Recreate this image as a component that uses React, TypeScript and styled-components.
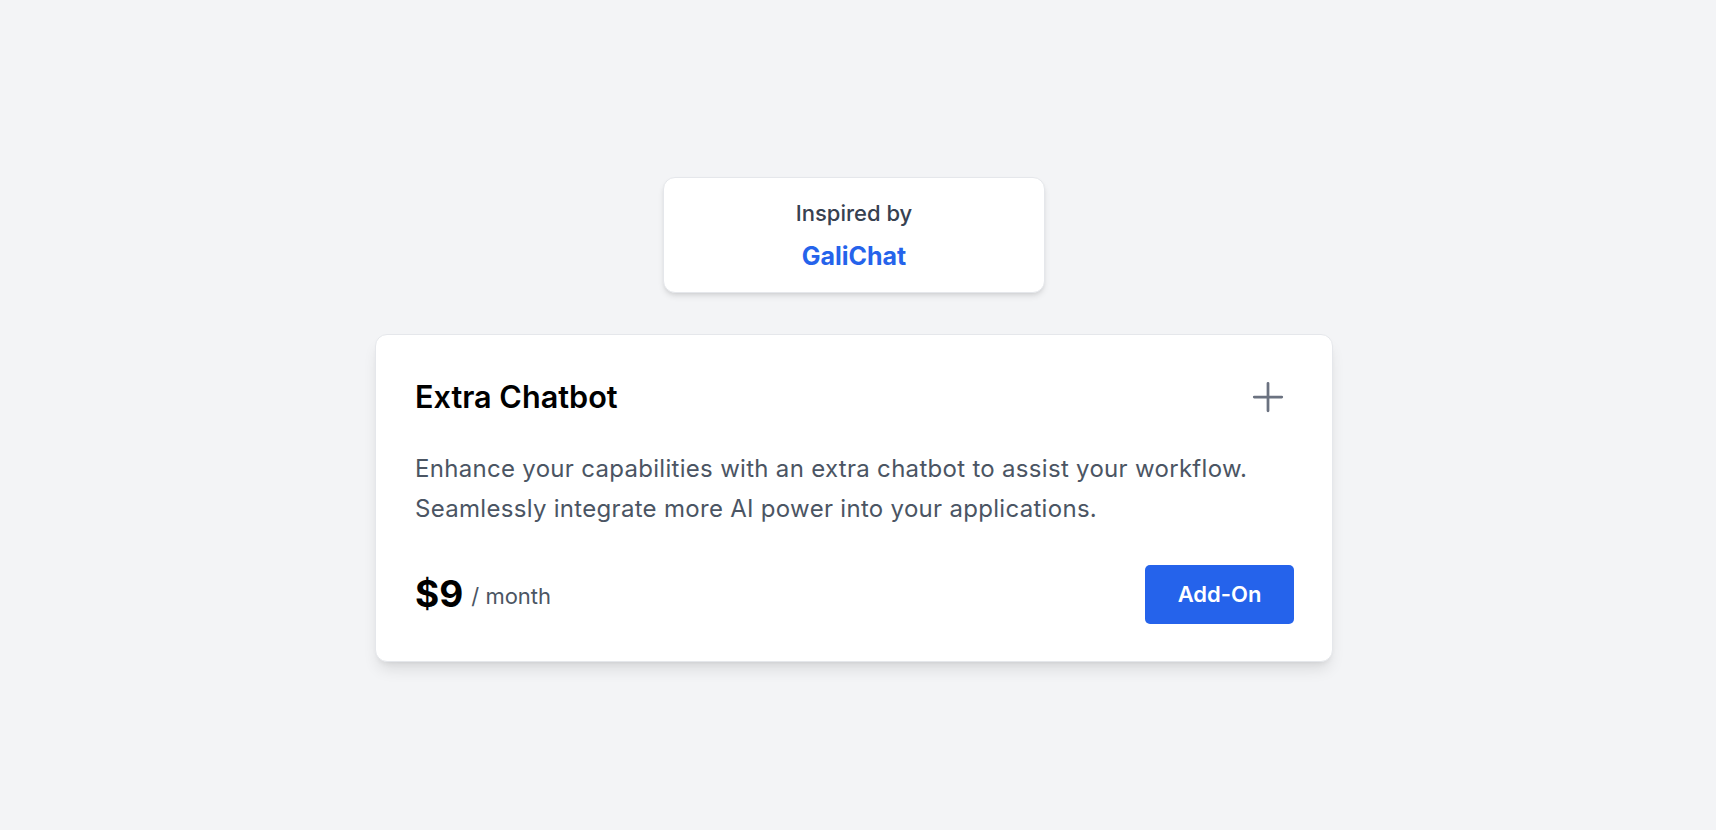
import styled, { createGlobalStyle } from "styled-components";

const GlobalStyle = createGlobalStyle`
  * {
    box-sizing: border-box;
  }
  html, body {
    margin: 0;
    padding: 0;
    background-color: #f3f4f6;
    font-family: Inter, "Noto Sans", "Liberation Sans", sans-serif;
  }
`;

const Page = styled.div`
  min-height: 830px;
  display: flex;
  flex-direction: column;
  align-items: center;
  justify-content: center;
  gap: 41px;
  padding: 8px 8px 0 0;
`;

const CreditCard = styled.div`
  width: 382px;
  padding: 21px 24px;
  background: #ffffff;
  border: 1px solid #e5e7eb;
  border-radius: 12px;
  box-shadow: 0 4px 6px -1px rgba(0, 0, 0, 0.1), 0 2px 4px -2px rgba(0, 0, 0, 0.1);
  display: flex;
  flex-direction: column;
  align-items: center;
  gap: 14px;
`;

const CreditLabel = styled.div`
  font-size: 22px;
  line-height: 28px;
  font-weight: 500;
  color: #374151;
`;

const CreditLink = styled.a`
  font-size: 25px;
  line-height: 30px;
  font-weight: 700;
  color: #2563eb;
  text-decoration: none;
`;

const AddonCard = styled.div`
  width: 958px;
  padding: 40px 38px 37px 39px;
  background: #ffffff;
  border: 1px solid #e5e7eb;
  border-radius: 12px;
  box-shadow: 0 10px 15px -3px rgba(0, 0, 0, 0.1), 0 4px 6px -4px rgba(0, 0, 0, 0.1);
`;

const Row = styled.div<{ $mt?: number }>`
  display: flex;
  align-items: center;
  justify-content: space-between;
  margin-top: ${(p) => p.$mt ?? 0}px;
`;

const Title = styled.h2`
  margin: 0;
  font-size: 30.6px;
  line-height: 36px;
  font-weight: 600;
  color: #000000;
`;

const IconButton = styled.button`
  width: 44px;
  height: 44px;
  padding: 0;
  margin-right: 4px;
  border: none;
  background: transparent;
  color: #6b7280;
  display: flex;
  align-items: center;
  justify-content: center;
  cursor: pointer;
`;

const Description = styled.p`
  margin: 30px 0 0;
  font-size: 24px;
  line-height: 40px;
  letter-spacing: 0.3px;
  color: #4b5563;
`;

const Price = styled.div`
  display: flex;
  align-items: flex-end;
  gap: 8px;
`;

const Amount = styled.span`
  font-size: 37px;
  line-height: 40px;
  font-weight: 700;
  color: #000000;
`;

const Period = styled.span`
  font-size: 22px;
  line-height: 36px;
  color: #4b5563;
`;

const AddButton = styled.button`
  width: 149px;
  height: 59px;
  border: none;
  border-radius: 5px;
  background: #2563eb;
  color: #ffffff;
  font-family: inherit;
  font-size: 22px;
  font-weight: 600;
  cursor: pointer;
`;

const PlusIcon = () => (
  <svg width="44" height="44" viewBox="0 0 24 24" fill="none" stroke="currentColor" strokeWidth={1.5}>
    <path strokeLinecap="round" strokeLinejoin="round" d="M12 4.5v15m7.5-7.5h-15" />
  </svg>
);

export default function App() {
  return (
    <>
      <GlobalStyle />
      <Page>
        <CreditCard>
          <CreditLabel>Inspired by</CreditLabel>
          <CreditLink href="#">GaliChat</CreditLink>
        </CreditCard>
        <AddonCard>
          <Row>
            <Title>Extra Chatbot</Title>
            <IconButton aria-label="Add">
              <PlusIcon />
            </IconButton>
          </Row>
          <Description>
            Enhance your capabilities with an extra chatbot to assist your workflow.
            <br />
            Seamlessly integrate more AI power into your applications.
          </Description>
          <Row $mt={36}>
            <Price>
              <Amount>$9</Amount>
              <Period>/ month</Period>
            </Price>
            <AddButton>Add-On</AddButton>
          </Row>
        </AddonCard>
      </Page>
    </>
  );
}
